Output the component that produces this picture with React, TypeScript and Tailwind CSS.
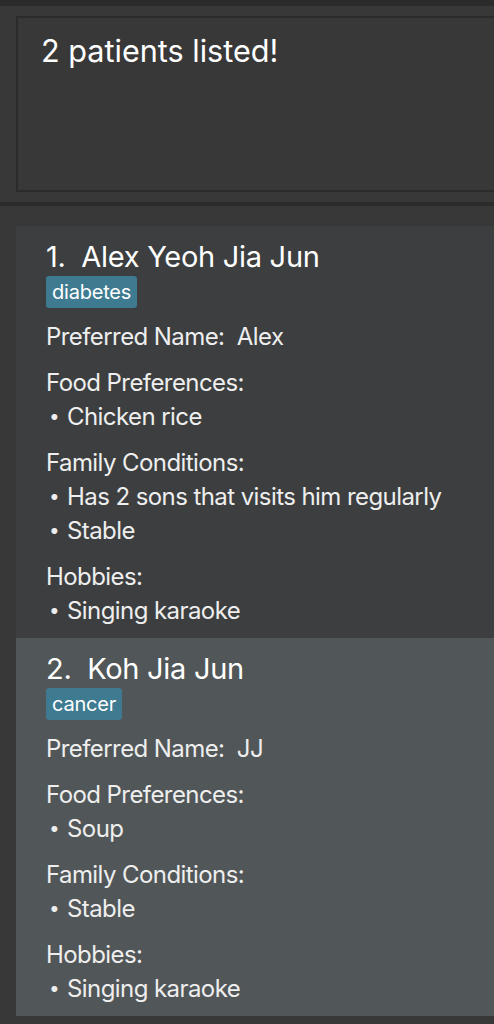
import React from 'react';

type Patient = {
  id: number;
  name: string;
  tag: string;
  preferredName: string;
  food: string[];
  family: string[];
  hobbies: string[];
};

const patients: Patient[] = [
  {
    id: 1,
    name: 'Alex Yeoh Jia Jun',
    tag: 'diabetes',
    preferredName: 'Alex',
    food: ['Chicken rice'],
    family: ['Has 2 sons that visits him regularly', 'Stable'],
    hobbies: ['Singing karaoke'],
  },
  {
    id: 2,
    name: 'Koh Jia Jun',
    tag: 'cancer',
    preferredName: 'JJ',
    food: ['Soup'],
    family: ['Stable'],
    hobbies: ['Singing karaoke'],
  },
];

const Section: React.FC<{ title: string; items: string[] }> = ({ title, items }) => (
  <div>
    <div className="h-[34px] leading-[34px]">{title}</div>
    {items.map((item) => (
      <div key={item} className="h-[34px] leading-[34px] flex items-center">
        <span className="w-[21px] pl-[3px] text-[19px]">•</span>
        <span>{item}</span>
      </div>
    ))}
  </div>
);

const PatientCard: React.FC<{ patient: Patient; odd: boolean }> = ({ patient, odd }) => (
  <div className={`pl-[30px] pt-[12px] pb-[10px] ${odd ? 'bg-[#515658]' : 'bg-[#3c3e3f]'}`}>
    <div className="text-[29px] leading-[38px] tracking-[-0.01em] text-white whitespace-pre">
      {patient.id}.  {patient.name}
    </div>
    <div className="flex">
      <span className="bg-[#3e7b91] text-white text-[20px] leading-[32px] h-[32px] px-[6px] rounded-[3px] tracking-[-0.01em]">
        {patient.tag}
      </span>
    </div>
    <div className="mt-[12px] flex flex-col gap-[12px] text-[24px] tracking-[-0.024em] text-[#eeeeee]">
      <div className="h-[34px] leading-[34px] whitespace-pre">Preferred Name:  {patient.preferredName}</div>
      <Section title="Food Preferences:" items={patient.food} />
      <Section title="Family Conditions:" items={patient.family} />
      <Section title="Hobbies:" items={patient.hobbies} />
    </div>
  </div>
);

export default function App() {
  return (
    <div className="w-[494px] h-[1024px] bg-[#383838] overflow-hidden" style={{ fontFamily: 'Inter, "Noto Sans", sans-serif' }}>
      <div className="h-[6px] bg-[#2b2b2b]" />
      <div className="pt-[10px] pl-[16px]">
        <div className="h-[176px] border-2 border-r-0 border-[#2b2b2b] pl-[23px] pt-[13px] text-[30.6px] leading-[40px] text-white">
          2 patients listed!
        </div>
      </div>
      <div className="mt-[10px] h-[4px] bg-[#2b2b2b]" />
      <div className="pt-[20px] pl-[16px]">
        {patients.map((p, i) => (
          <PatientCard key={p.id} patient={p} odd={i % 2 === 1} />
        ))}
      </div>
    </div>
  );
}
